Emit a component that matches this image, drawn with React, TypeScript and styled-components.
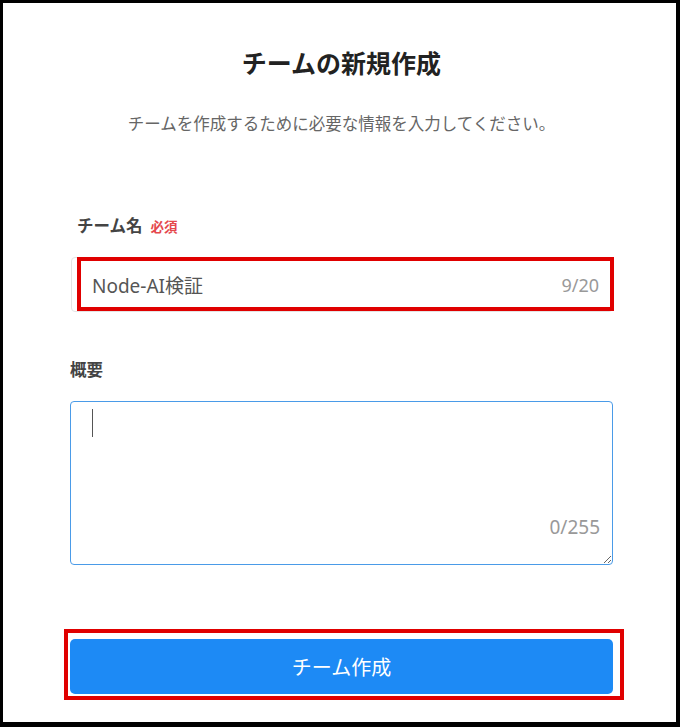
import React from 'react';
import styled, {createGlobalStyle} from 'styled-components';

const GlobalStyle = createGlobalStyle`
  html, body {
    margin: 0;
    padding: 0;
    background: #fff;
  }
  body {
    font-family: "Noto Sans", "Noto Sans CJK JP", sans-serif;
  }
  * {
    box-sizing: border-box;
  }
`

const Frame = styled.div`
  width: 680px;
  height: 727px;
  border-style: solid;
  border-color: #000;
  border-width: 3px 4px 5px 3px;
  background: #fff;
  padding: 44px 63px 0 67px;
  display: flex;
  flex-direction: column;
`

const Title = styled.h1`
  margin: 0;
  font-size: 25px;
  line-height: 32px;
  font-weight: 700;
  color: #222;
  text-align: center;
`

const Lead = styled.p`
  margin: 34px 0 0;
  font-size: 16.5px;
  line-height: 22px;
  color: #666;
  text-align: center;
`

const FieldLabel = styled.div<{$indent?: number; $top: number}>`
  display: flex;
  align-items: baseline;
  gap: 8px;
  margin-top: ${p => p.$top}px;
  padding-left: ${p => p.$indent ?? 0}px;
  font-size: 16.5px;
  line-height: 22px;
  font-weight: 700;
  color: #444;
`

const Required = styled.span`
  font-size: 13.5px;
  font-weight: 700;
  color: #e5484d;
`

const Field = styled.div<{$top: number}>`
  position: relative;
  margin-top: ${p => p.$top}px;
`

const TextBox = styled.div`
  display: flex;
  align-items: center;
  justify-content: space-between;
  height: 55px;
  margin-left: 1px;
  padding: 0 13px 0 20px;
  border: 1px solid #e4e4e4;
  border-radius: 4px;
  background: #fff;
`

const Value = styled.span`
  font-size: 19px;
  color: #555;
`

const Count = styled.span`
  font-size: 18px;
  color: #999;
`

const TextArea = styled.textarea`
  display: block;
  width: 100%;
  height: 164px;
  margin: 0;
  padding: 10px 20px;
  border: 1px solid #4a9be8;
  border-radius: 4px;
  outline: none;
  resize: vertical;
  font-family: inherit;
  font-size: 16px;
  color: #555;
  background: #fff;
`

const Caret = styled.span`
  position: absolute;
  left: 22px;
  top: 8px;
  width: 1px;
  height: 28px;
  background: #555;
`

const AreaCount = styled.span`
  position: absolute;
  right: 13px;
  bottom: 25px;
  font-size: 19px;
  color: #999;
`

const SubmitButton = styled.button`
  display: block;
  width: 100%;
  height: 55px;
  border: none;
  border-radius: 5px;
  background: #1d8af5;
  color: #fff;
  font-family: inherit;
  font-size: 20px;
  cursor: pointer;
`

const Highlight = styled.span<{$l: number; $t: number; $r: number; $b: number}>`
  position: absolute;
  left: ${p => p.$l}px;
  top: ${p => p.$t}px;
  right: ${p => p.$r}px;
  bottom: ${p => p.$b}px;
  border: 4px solid #e00000;
  pointer-events: none;
`

export default function App() {
    return (
        <>
            <GlobalStyle />
            <Frame>
                <Title>チームの新規作成</Title>
                <Lead>チームを作成するために必要な情報を入力してください。</Lead>

                <FieldLabel $top={80} $indent={7}>
                    チーム名<Required>必須</Required>
                </FieldLabel>
                <Field $top={19}>
                    <TextBox>
                        <Value>Node-AI検証</Value>
                        <Count>9/20</Count>
                    </TextBox>
                    <Highlight $l={7} $t={0} $r={-1} $b={1} />
                </Field>

                <FieldLabel $top={47}>概要</FieldLabel>
                <Field $top={20}>
                    <TextArea defaultValue="" />
                    <Caret />
                    <AreaCount>0/255</AreaCount>
                </Field>

                <Field $top={74}>
                    <SubmitButton type="button">チーム作成</SubmitButton>
                    <Highlight $l={-6} $t={-10} $r={-11} $b={-6} />
                </Field>
            </Frame>
        </>
    )
}
